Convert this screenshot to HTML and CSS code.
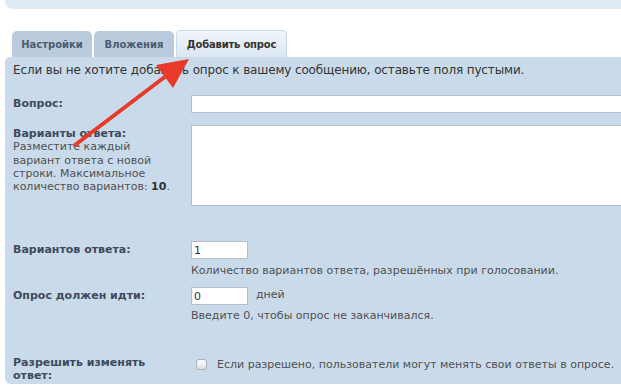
FILE: index.html
```html
<!DOCTYPE html>
<html lang="ru">
<head>
<meta charset="utf-8">
<link rel="stylesheet" href="styles.css">
</head>
<body>
<div class="topbar"></div>
<div class="tabs">
  <div class="tab">Настройки</div>
  <div class="tab">Вложения</div>
  <div class="tab active">Добавить опрос</div>
</div>
<div class="panel">
  <p class="intro">Если вы не хотите добавить опрос к вашему сообщению, оставьте поля пустыми.</p>
  <div class="row r-question">
    <div class="lbl">Вопрос:</div>
    <div class="field"><input class="text wide" type="text"></div>
  </div>
  <div class="row r-options">
    <div class="lbl">Варианты ответа:<span class="hint">Разместите каждый вариант ответа с новой строки. Максимальное количество вариантов: <b>10</b>.</span></div>
    <div class="field"><textarea class="area"></textarea></div>
  </div>
  <div class="dash d1"></div>
  <div class="row r-count">
    <div class="lbl">Вариантов ответа:</div>
    <div class="field">
      <input class="text small" type="text" value="1">
      <div class="hint h1">Количество вариантов ответа, разрешённых при голосовании.</div>
    </div>
  </div>
  <div class="row r-days">
    <div class="lbl">Опрос должен идти:</div>
    <div class="field">
      <div class="inline"><input class="text small" type="text" value="0"><span class="unit">дней</span></div>
      <div class="hint h2">Введите 0, чтобы опрос не заканчивался.</div>
    </div>
  </div>
  <div class="dash d2"></div>
  <div class="row r-change">
    <div class="lbl">Разрешить изменять ответ:</div>
    <div class="field check">
      <span class="box"></span><span class="ctext">Если разрешено, пользователи могут менять свои ответы в опросе.</span>
    </div>
  </div>
</div>
<svg class="arrow" width="200" height="120" viewBox="0 0 200 120">
  <line x1="75" y1="105" x2="170" y2="33" stroke="#e8392b" stroke-width="4" stroke-linecap="round"/>
  <polygon points="189,19 156,25 173,48" fill="#e8392b"/>
</svg>
</body>
</html>
```

FILE: styles.css
```css
html, body {
  margin: 0;
  padding: 0;
  background: #fff;
  overflow: hidden;
}
body {
  width: 621px;
  height: 387px;
  position: relative;
  font-family: "DejaVu Sans", Verdana, sans-serif;
  color: #333;
}
.topbar {
  margin-left: 5px;
  height: 9px;
  background: #e1ebf3;
  border-bottom-left-radius: 8px;
}
.tabs {
  display: flex;
  align-items: flex-end;
  gap: 2px;
  margin-top: 21px;
  padding-left: 12px;
  height: 27px;
}
.tab {
  height: 26px;
  box-sizing: border-box;
  padding: 0 4px;
  display: flex;
  align-items: center;
  justify-content: center;
  white-space: nowrap;
  background: #b9cbdc;
  border-radius: 5px 5px 0 0;
  font-size: 10px;
  font-weight: bold;
  color: #4b5b72;
  width: 80px;
}
.tab.active {
  height: 27px;
  width: 111px;
  background: linear-gradient(#f0f5fa, #dce7f1);
  border: 1px solid #c9d9e8;
  border-bottom: none;
  color: #333;
  letter-spacing: -0.2px;
}
.panel {
  margin-left: 5px;
  margin-right: -30px;
  height: 327px;
  box-sizing: border-box;
  background: #c9dbeb;
  border-radius: 5px 0 0 6px;
  padding: 5px 0 0 8px;
}
.intro {
  margin: 0;
  font-size: 12px;
  line-height: 16px;
  letter-spacing: -0.14px;
  color: #333;
}
.row {
  display: grid;
  grid-template-columns: 178px 1fr;
}
.lbl {
  font-size: 11px;
  line-height: 13.3px;
  font-weight: bold;
  color: #3e4a5b;
  padding-top: 2px;
  padding-right: 10px;
}
.hint {
  display: block;
  font-weight: normal;
  color: #505050;
  font-size: 11px;
  line-height: 13.3px;
}
.lbl .hint b { font-weight: bold; color: #333; }
.r-question { margin-top: 17px; }
.r-options { margin-top: 12px; }
.text {
  box-sizing: border-box;
  height: 18px;
  border: 1px solid #b5bdc5;
  background: #fff;
  font-family: "DejaVu Sans", Verdana, sans-serif;
  font-size: 11px;
  color: #333;
  padding: 1px 2px 0;
  margin: 0;
  display: block;
}
.wide { width: 100%; }
.small { width: 57px; }
.area {
  box-sizing: border-box;
  display: block;
  width: 100%;
  height: 81px;
  border: 1px solid #b5bdc5;
  background: #fff;
  margin: 0;
  resize: none;
}
.dash {
  border-top: 1px dashed #d9dde1;
  margin-right: 40px;
}
.d1 { margin-top: 20px; }
.r-count { margin-top: 14px; }
.h1 { margin-top: 5px; }
.r-days { margin-top: 10px; }
.inline { display: flex; align-items: center; }
.unit {
  font-size: 11px;
  color: #505050;
  margin-left: 8px;
  margin-top: -4px;
}
.h2 { margin-top: 4px; }
.d2 { margin-top: 15px; }
.r-change { margin-top: 15px; }
.check {
  display: flex;
  align-items: flex-start;
  padding-top: 5px;
}
.box {
  width: 9px;
  height: 9px;
  border: 1px solid #a9b0b7;
  border-radius: 3px;
  background: linear-gradient(#fcfcfc, #dfe2e5);
  margin-left: 5px;
  flex: none;
}
.ctext {
  font-size: 11px;
  line-height: 13.3px;
  color: #505050;
  margin-left: 10px;
  margin-top: -1px;
}
.arrow {
  position: absolute;
  left: 0;
  top: 40px;
}
```
